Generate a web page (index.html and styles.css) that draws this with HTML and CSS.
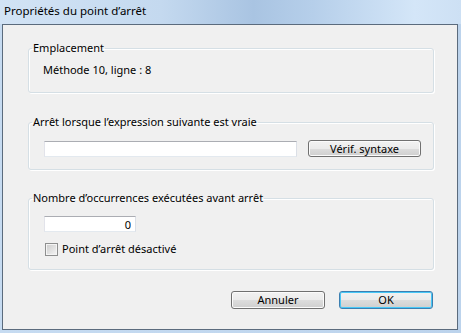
FILE: index.html
```html
<!DOCTYPE html>
<html lang="fr">
<head>
    <meta charset="UTF-8">
    <title>Propriétés du point d’arrêt</title>
    <link rel="stylesheet" href="styles.css">
</head>
<body>
    <div class="window">
        <div class="titlebar">
            <span class="caption">Propriétés du point d’arrêt</span>
        </div>
        <div class="client">
            <fieldset class="group group-location">
                <legend>Emplacement</legend>
                <div class="location">Méthode 10, ligne : 8</div>
            </fieldset>
            <fieldset class="group group-condition">
                <legend>Arrêt lorsque l’expression suivante est vraie</legend>
                <div class="row">
                    <input type="text" class="textbox expr">
                    <button type="button" class="btn btn-check">Vérif. syntaxe</button>
                </div>
            </fieldset>
            <fieldset class="group group-hits">
                <legend>Nombre d’occurrences exécutées avant arrêt</legend>
                <div class="hits-body">
                    <input type="text" class="textbox count" value="0">
                    <label class="check">
                        <span class="checkbox"></span>
                        Point d’arrêt désactivé
                    </label>
                </div>
            </fieldset>
            <div class="actions">
                <button type="button" class="btn">Annuler</button>
                <button type="button" class="btn btn-default">OK</button>
            </div>
        </div>
    </div>
</body>
</html>
```

FILE: styles.css
```css
body {
    margin: 0;
    padding: 0;
    font-family: "Noto Sans", sans-serif;
    font-size: 11px;
    color: #000;
    background-color: #c2d8ef;
}
.window {
    width: 461px;
    height: 333px;
    display: flex;
    flex-direction: column;
    background: linear-gradient(90deg, #c6dbf1 0%, #bcd3ec 100%);
}
.titlebar {
    height: 24px;
    flex: none;
    background: linear-gradient(90deg, #d2e3f5 0%, #c4d9ef 35%, #a9c4e2 55%, #b6cfea 68%, #d4e6f8 90%, #cde0f4 100%);
}
.caption {
    display: block;
    padding-left: 4px;
    line-height: 21px;
    font-size: 11.5px;
    color: #000;
}
.client {
    flex: 1;
    margin: 0 3px 3px 2px;
    border: 1px solid #5b6b7d;
    background-color: #f0f0f0;
    padding: 15px 23px 0 25px;
}

/* group boxes */
.group {
    margin: 0;
    padding: 0;
    border: 1px solid #d5dfe5;
    border-radius: 3px;
    box-shadow: inset 1px 1px 0 #fff, 1px 1px 0 #fff;
}
.group legend {
    margin-left: 3px;
    padding: 0 1px;
    line-height: 16px;
}
.group-condition,
.group-hits {
    margin-top: 21px;
}
.group-hits {
    margin-top: 20px;
}
.location {
    padding: 6px 0 14px 14px;
    line-height: 16px;
}
.row {
    display: flex;
    align-items: flex-start;
    padding: 10px 0 12px 15px;
}
.hits-body {
    padding: 10px 0 12px 15px;
}

/* inputs */
.textbox {
    box-sizing: border-box;
    height: 16px;
    margin: 0;
    padding: 0 4px;
    border: 1px solid;
    border-color: #abadb3 #dbdfe6 #e3e9ef #e2e3ea;
    background-color: #fff;
    font-family: inherit;
    font-size: 11px;
    outline: none;
}
.expr {
    width: 253px;
    margin-top: 1px;
}
.count {
    display: block;
    width: 92px;
    text-align: right;
}
.check {
    display: flex;
    align-items: center;
    height: 16px;
    margin-top: 9px;
    line-height: 16px;
}
.checkbox {
    box-sizing: border-box;
    width: 13px;
    height: 13px;
    margin: 0 4px 0 1px;
    border: 1px solid #8e8f8f;
    background: linear-gradient(135deg, #cbcbcb 0%, #e4e4e4 60%, #f6f6f6 100%);
    box-shadow: inset 0 0 0 1px #f4f4f4;
}

/* buttons */
.btn {
    box-sizing: border-box;
    height: 17px;
    padding: 0;
    border: 1px solid #707070;
    border-radius: 3px;
    background: linear-gradient(#f2f2f2 0%, #ebebeb 50%, #dddddd 50%, #cfcfcf 100%);
    box-shadow: inset 0 0 0 1px #fbfbfb;
    font-family: inherit;
    font-size: 11px;
    line-height: 14px;
    color: #000;
}
.btn-check {
    width: 113px;
    margin-left: 11px;
}
.actions {
    display: flex;
    justify-content: flex-end;
    gap: 14px;
    margin-top: 21px;
    padding-right: 1px;
}
.actions .btn {
    width: 94px;
    height: 18px;
}
.btn-default {
    border-color: #3c7fb1;
    box-shadow: inset 0 0 0 1px #48c8f7;
}
```
